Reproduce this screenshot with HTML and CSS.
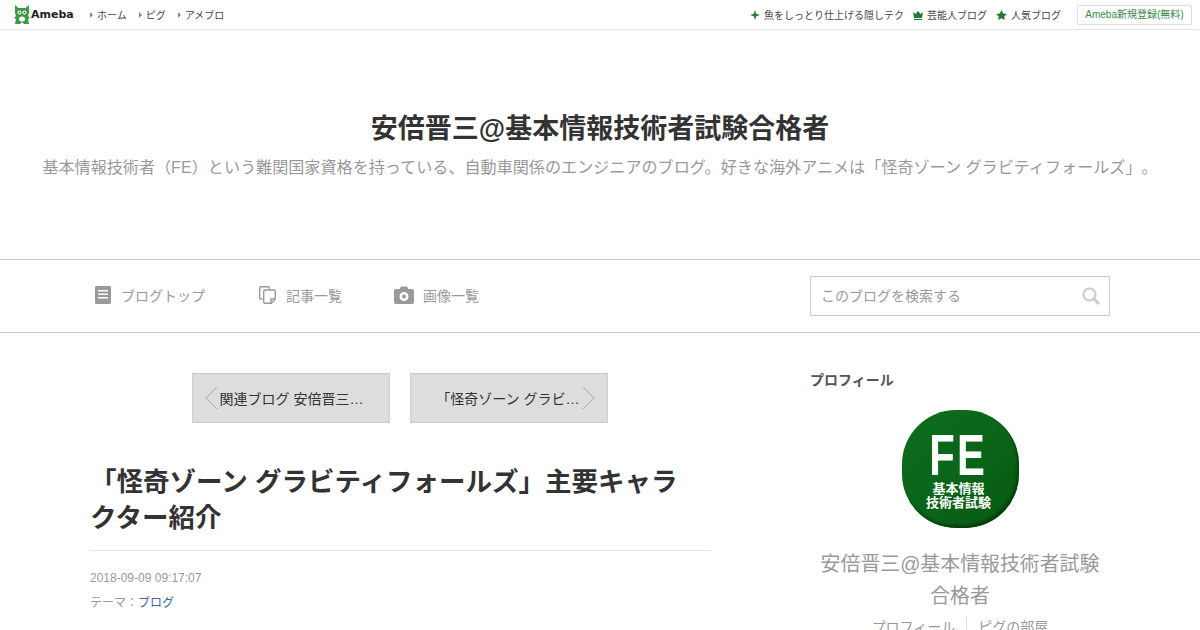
FILE: index.html
```html
<!DOCTYPE html>
<html lang="ja">
<head>
    <meta charset="UTF-8">
    <title>安倍晋三@基本情報技術者試験合格者</title>
    <link rel="stylesheet" href="styles.css">
</head>
<body>
    <div class="topbar">
        <div class="topbar-left">
            <a class="logo">
                <svg width="16" height="20" viewBox="0 0 16 20"><path fill="#3d9a45" d="M1 0l3.500 3h7L15 0v8l-1 3 2 2-2 1 1 5h-5l-2-2-2 2H1l1-5-2-1 2-2-1-3z"/><circle cx="5.500" cy="7.500" r="2" fill="#fff"/><circle cx="10.500" cy="7.500" r="2" fill="#fff"/><circle cx="5.500" cy="7.500" r=".8" fill="#222"/><circle cx="10.500" cy="7.500" r=".8" fill="#222"/><ellipse cx="8" cy="14" rx="3" ry="2.500" fill="#fff"/></svg>
                <span class="logo-text">Ameba</span>
            </a>
            <a class="topnav">ホーム</a>
            <a class="topnav">ピグ</a>
            <a class="topnav">アメブロ</a>
        </div>
        <div class="topbar-right">
            <a class="toplink">
                <svg width="10" height="10" viewBox="0 0 10 10"><path fill="#237b31" d="M5 0l1.200 3.800L10 5 6.200 6.200 5 10 3.800 6.200 0 5l3.800-1.200z"/></svg>
                魚をしっとり仕上げる隠しテク
            </a>
            <a class="toplink">
                <svg width="10" height="10" viewBox="0 0 10 10"><path fill="#237b31" d="M0 2l2.500 2L5 1l2.500 3L10 2 9 8H1zM1 9h8v1H1z"/></svg>
                芸能人ブログ
            </a>
            <a class="toplink">
                <svg width="11" height="10" viewBox="0 0 11 10"><path fill="#237b31" d="M5.500 0l1.700 3.400 3.800.5-2.800 2.600.7 3.500-3.400-1.800L2.100 10l.7-3.500L0 3.900l3.800-.5z"/></svg>
                人気ブログ
            </a>
            <a class="signup">Ameba新規登録(無料)</a>
        </div>
    </div>

    <header class="blog-header">
        <h1 class="blog-title">安倍晋三@基本情報技術者試験合格者</h1>
        <p class="blog-desc">基本情報技術者（FE）という難関国家資格を持っている、自動車関係のエンジニアのブログ。好きな海外アニメは「怪奇ゾーン グラビティフォールズ」。</p>
    </header>

    <nav class="blognav">
        <div class="blognav-links">
            <a class="navitem nav-top">
                <svg width="16" height="18" viewBox="0 0 16 18"><path fill="#999" fill-rule="evenodd" d="M1.500 0h13A1.500 1.500 0 0 1 16 1.500v15a1.500 1.500 0 0 1-1.500 1.500h-13A1.500 1.500 0 0 1 0 16.500v-15A1.500 1.500 0 0 1 1.500 0zM3 4v1.500h10V4zm0 3.500V9h10V7.500zM3 11v1.500h10V11z"/></svg>
                ブログトップ
            </a>
            <a class="navitem nav-list">
                <svg width="17" height="18" viewBox="0 0 17 18" fill="none" stroke="#999" stroke-width="1.400"><path d="M3.500 13H2a1.300 1.300 0 0 1-1.300-1.300V2A1.300 1.300 0 0 1 2 .7h7A1.300 1.300 0 0 1 10.300 2v1"/><path d="M6 4h9a1.300 1.300 0 0 1 1.300 1.300V13l-4 4.300H6a1.300 1.300 0 0 1-1.300-1.300V5.300A1.300 1.300 0 0 1 6 4z"/><path d="M16 13h-4v4"/></svg>
                記事一覧
            </a>
            <a class="navitem nav-image">
                <svg width="20" height="18" viewBox="0 0 20 18"><path fill="#999" fill-rule="evenodd" d="M2 3h3.500L7 .5h6L14.500 3H18a2 2 0 0 1 2 2v11a2 2 0 0 1-2 2H2a2 2 0 0 1-2-2V5a2 2 0 0 1 2-2zm8 3a4.500 4.500 0 1 0 0 9 4.500 4.500 0 0 0 0-9zm0 2.500a2 2 0 1 1 0 4 2 2 0 0 1 0-4z"/></svg>
                画像一覧
            </a>
        </div>
        <div class="searchbox">
            <span class="search-placeholder">このブログを検索する</span>
            <svg width="18" height="18" viewBox="0 0 18 18" fill="none" stroke="#ccc"><circle cx="7.500" cy="7.500" r="6" stroke-width="2.200"/><path d="M12 12l5 5" stroke-width="3"/></svg>
        </div>
    </nav>

    <div class="content">
        <main class="main">
            <div class="pager">
                <a class="pager-btn pager-prev">
                    <svg class="chevron" width="13" height="24" viewBox="0 0 13 24" fill="none" stroke="#aaa"><path d="M12 1L1 12l11 11"/></svg>
                    <span>関連ブログ 安倍晋三…</span>
                </a>
                <a class="pager-btn pager-next">
                    <span>「怪奇ゾーン グラビ…</span>
                    <svg class="chevron" width="13" height="24" viewBox="0 0 13 24" fill="none" stroke="#aaa"><path d="M1 1l11 11L1 23"/></svg>
                </a>
            </div>
            <h2 class="entry-title">「怪奇ゾーン グラビティフォールズ」主要キャラクター紹介</h2>
            <div class="entry-date">2018-09-09 09:17:07</div>
            <div class="entry-theme">テーマ：<a class="theme-link">ブログ</a></div>
        </main>
        <aside class="side">
            <h3 class="side-title">プロフィール</h3>
            <div class="badge">
                <span class="badge-fe">FE</span>
                <span class="badge-text">基本情報<br>技術者試験</span>
            </div>
            <div class="profile-name">安倍晋三@基本情報技術者試験合格者</div>
            <div class="profile-links">
                <a class="profile-link">プロフィール</a>
                <a class="profile-link">ピグの部屋</a>
            </div>
        </aside>
    </div>
</body>
</html>
```

FILE: styles.css
```css
* {
    box-sizing: border-box;
}
html, body {
    height: 630px;
    overflow: hidden;
}
body {
    margin: 0;
    background: #fff;
    color: #333;
    font-family: "Liberation Sans", "Noto Sans CJK JP", sans-serif;
    text-spacing-trim: space-all;
}
.topbar {
    display: flex;
    justify-content: space-between;
    align-items: center;
    height: 30px;
    padding: 0 8px 0 14px;
    border-bottom: 1px solid #e2e2e2;
}
.topbar-left, .topbar-right {
    display: flex;
    align-items: center;
}
.logo {
    display: flex;
    align-items: center;
    gap: 1px;
    width: 76px;
}
.logo-text {
    font-family: "DejaVu Sans", sans-serif;
    font-size: 11px;
    font-weight: bold;
    color: #222;
}
.topnav {
    font-size: 10px;
    color: #444;
    margin-right: 12px;
    display: flex;
    align-items: center;
}
.topnav::before {
    content: "";
    border-left: 3px solid #888;
    border-top: 3px solid transparent;
    border-bottom: 3px solid transparent;
    margin-right: 4px;
}
.toplink {
    display: flex;
    align-items: center;
    gap: 4px;
    font-size: 10px;
    color: #444;
    margin-right: 9px;
}
.signup {
    margin-left: 7px;
    width: 115px;
    height: 20px;
    line-height: 17px;
    text-align: center;
    font-size: 10px;
    color: #3b8a48;
    border: 1px solid #ddd;
    border-radius: 2px;
}
.blog-header {
    height: 229px;
    padding-top: 80px;
    text-align: center;
}
.blog-title {
    margin: 0;
    font-size: 27px;
    line-height: 38px;
    font-weight: bold;
    color: #333;
}
.blog-desc {
    margin: 8px 0 0;
    font-size: 16.100px;
    line-height: 22px;
    color: #999;
}
.blognav {
    display: flex;
    justify-content: space-between;
    align-items: center;
    height: 74px;
    padding: 0 90px 0 95px;
    border-top: 1px solid #ccc;
    border-bottom: 1px solid #ccc;
}
.blognav-links {
    display: flex;
    align-items: center;
}
.navitem {
    display: flex;
    align-items: center;
    font-size: 14px;
    color: #999;
    margin-top: -2px;
}
.nav-top {
    gap: 10px;
    margin-right: 54px;
}
.nav-list {
    gap: 10px;
    margin-right: 52px;
}
.nav-image {
    gap: 9px;
}
.searchbox {
    display: flex;
    justify-content: space-between;
    align-items: center;
    width: 300px;
    height: 40px;
    padding: 0 9px 0 10px;
    border: 1px solid #ccc;
}
.search-placeholder {
    font-size: 14px;
    color: #999;
    margin-top: -2px;
}
.content {
    display: flex;
    justify-content: space-between;
    padding: 40px 90px 0;
}
.main {
    width: 621px;
}
.pager {
    display: flex;
    justify-content: center;
    gap: 20px;
    margin-bottom: 41px;
    margin-left: -2px;
}
.pager-btn {
    display: flex;
    align-items: center;
    gap: 2px;
    width: 198px;
    height: 50px;
    padding: 0 5px 0 12px;
    font-size: 14px;
    color: #333;
    background: #ddd;
    border: 1px solid #ccc;
}
.pager-next {
    justify-content: flex-end;
    padding: 0 12px 0 5px;
}
.entry-title {
    margin: 0;
    padding: 0 15px 14px 0;
    font-size: 26.500px;
    line-height: 36px;
    font-weight: bold;
    color: #333;
    border-bottom: 1px solid #e5e5e5;
}
.entry-date {
    margin-top: 19px;
    font-size: 12px;
    line-height: 16px;
    color: #999;
}
.entry-theme {
    margin-top: 8px;
    font-size: 12px;
    line-height: 18px;
    color: #999;
}
.theme-link {
    color: #3a66a8;
}
.side {
    width: 300px;
}
.side-title {
    margin: -1px 0 0;
    font-size: 14px;
    line-height: 16px;
    font-weight: bold;
    color: #555;
}
.badge {
    display: flex;
    flex-direction: column;
    align-items: center;
    width: 117px;
    height: 118px;
    margin: 22px auto 0;
    padding: 23px 3px 0 0;
    border-radius: 46%;
    background: linear-gradient(135deg, #0c6e1d 0%, #0a6518 50%, #075a10 100%);
    box-shadow: inset -2px -3px 3px #04400a;
    color: #fff;
    font-weight: bold;
    text-align: center;
}
.badge-fe {
    font-size: 58px;
    line-height: 44px;
    letter-spacing: 3px;
    transform: scaleX(0.72);
}
.badge-text {
    margin-top: 5px;
    font-size: 13px;
    line-height: 14px;
}
.profile-name {
    margin-top: 20px;
    padding: 0 10px;
    font-size: 19.900px;
    line-height: 32px;
    text-align: center;
    color: #999;
}
.profile-links {
    display: flex;
    justify-content: center;
    margin-top: 5px;
}
.profile-link {
    padding: 0 11px;
    font-size: 14px;
    line-height: 20px;
    color: #999;
}
.profile-link + .profile-link {
    border-left: 1px solid #ddd;
}
```
